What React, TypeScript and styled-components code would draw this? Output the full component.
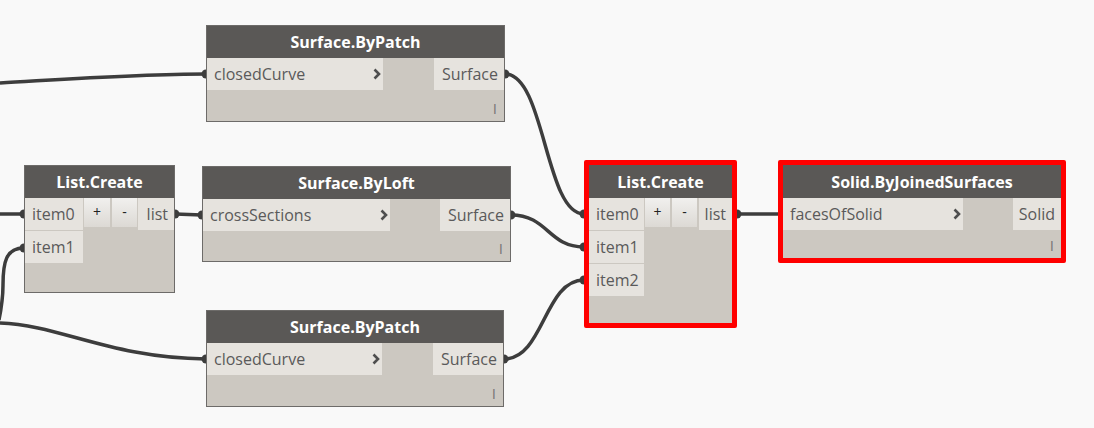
import React from "react";
import styled, { createGlobalStyle } from "styled-components";

const Global = createGlobalStyle`
  html, body { margin: 0; padding: 0; background: #f9f9f9; }
  body { font-family: "Open Sans", "Noto Sans", sans-serif; }
`;

const Canvas = styled.div`
  position: relative;
  width: 1094px;
  height: 428px;
  overflow: hidden;
  background: #f9f9f9;
`;

const Wires = styled.svg`
  position: absolute;
  left: 0;
  top: 0;
  z-index: 0;
`;

const NodeBox = styled.div<{ $x: number; $y: number; $w: number; $sel?: boolean }>`
  position: absolute;
  left: ${(p) => p.$x}px;
  top: ${(p) => p.$y}px;
  width: ${(p) => p.$w}px;
  box-sizing: border-box;
  z-index: 1;
  background: #ccc8c1;
  border: ${(p) => (p.$sel ? "5px solid #ff0000" : "1px solid #6d6b69")};
  border-radius: ${(p) => (p.$sel ? "2px" : "0")};
  display: flex;
  flex-direction: column;
`;

const Header = styled.div<{ $sel?: boolean }>`
  height: ${(p) => (p.$sel ? 33 : 32)}px;
  background: #5a5856;
  color: #ffffff;
  font-weight: 700;
  font-size: 16px;
  display: flex;
  align-items: center;
  justify-content: center;
  white-space: nowrap;
`;

const Row = styled.div`
  display: flex;
  align-items: flex-start;
`;

const ItemColumn = styled.div<{ $w: number }>`
  width: ${(p) => p.$w}px;
  display: flex;
  flex-direction: column;
  gap: 1px;
  margin-right: 1px;
`;

const InputPort = styled.div<{ $w?: number }>`
  ${(p) => (p.$w ? `width: ${p.$w}px;` : "")}
  height: 32px;
  box-sizing: border-box;
  background: #e6e3de;
  color: #5a5a5a;
  font-size: 16px;
  display: flex;
  align-items: center;
  justify-content: space-between;
  padding: 0 2px 0 7px;
  white-space: nowrap;
`;

const OutputPort = styled.div<{ $w: number }>`
  width: ${(p) => p.$w}px;
  height: 32px;
  box-sizing: border-box;
  background: #e6e3de;
  color: #5a5a5a;
  font-size: 16px;
  display: flex;
  align-items: center;
  justify-content: flex-end;
  padding-right: 6px;
  white-space: nowrap;
`;

const Spacer = styled.div`
  flex: 1;
`;

const Buttons = styled.div`
  display: flex;
  gap: 2px;
`;

const AddButton = styled.div<{ $w: number }>`
  width: ${(p) => p.$w}px;
  height: 29px;
  background: linear-gradient(#f1f0ee, #dcd9d4);
  color: #222222;
  font-size: 14px;
  display: flex;
  align-items: center;
  justify-content: center;
  padding-bottom: 3px;
  box-sizing: border-box;
`;

const Footer = styled.div<{ $h: number }>`
  height: ${(p) => p.$h}px;
  display: flex;
  justify-content: flex-end;
  align-items: flex-end;
  padding: 0 7px 5px 0;
  box-sizing: border-box;
`;

const Lacing = styled.span`
  font-size: 15px;
  line-height: 15px;
  color: #787878;
  font-weight: 400;
`;

const Chevron = () => (
  <svg width="8" height="12" viewBox="0 0 8 12">
    <polyline points="1.5,1.5 6,6 1.5,10.5" fill="none" stroke="#4e4e4e" strokeWidth="2.6" />
  </svg>
);

type FnProps = {
  x: number;
  y: number;
  w: number;
  title: string;
  input: string;
  inW: number;
  output: string;
  outW: number;
  footer: number;
  sel?: boolean;
};

const FunctionNode = ({ x, y, w, title, input, inW, output, outW, footer, sel }: FnProps) => (
  <NodeBox $x={x} $y={y} $w={w} $sel={sel}>
    <Header $sel={sel}>{title}</Header>
    <Row>
      <InputPort $w={inW}>
        <span>{input}</span>
        <Chevron />
      </InputPort>
      <Spacer />
      <OutputPort $w={outW}>{output}</OutputPort>
    </Row>
    <Footer $h={footer}>
      <Lacing>I</Lacing>
    </Footer>
  </NodeBox>
);

type ListProps = {
  x: number;
  y: number;
  w: number;
  items: string[];
  itemW: number;
  btnW: [number, number];
  outW: number;
  footer: number;
  sel?: boolean;
};

const ListNode = ({ x, y, w, items, itemW, btnW, outW, footer, sel }: ListProps) => (
  <NodeBox $x={x} $y={y} $w={w} $sel={sel}>
    <Header $sel={sel}>List.Create</Header>
    <Row>
      <ItemColumn $w={itemW}>
        {items.map((it) => (
          <InputPort key={it}>{it}</InputPort>
        ))}
      </ItemColumn>
      <Buttons>
        <AddButton $w={btnW[0]}>+</AddButton>
        <AddButton $w={btnW[1]}>-</AddButton>
      </Buttons>
      <Spacer />
      <OutputPort $w={outW}>list</OutputPort>
    </Row>
    <Footer $h={footer} />
  </NodeBox>
);

const wires = [
  "M0 83 C70 79 140 74 206 74",
  "M505 74 C545 74 545 214 584 214",
  "M511 215 C548 215 548 247 584 247",
  "M504 359 C544 359 544 280 584 280",
  "M737 214 L778 214",
  "M175 214 L202 215",
  "M0 214 L24 214",
  "M24 248 C6 248 3 262 3 285 C3 300 1 310 -1 320",
  "M0 323 C60 325 110 358 206 359",
];

const nubs: [number, number][] = [
  [206, 74],
  [505, 74],
  [511, 215],
  [504, 359],
  [584, 214],
  [584, 247],
  [584, 280],
  [737, 214],
  [175, 214],
  [202, 215],
  [24, 214],
  [24, 248],
  [206, 359],
];

export default function App() {
  return (
    <>
      <Global />
      <Canvas>
        <Wires width="1094" height="428" viewBox="0 0 1094 428">
          {wires.map((d, i) => (
            <path key={i} d={d} fill="none" stroke="#3d3d3d" strokeWidth="3.5" />
          ))}
          {nubs.map(([cx, cy], i) => (
            <circle key={i} cx={cx} cy={cy} r="4.5" fill="#3d3d3d" />
          ))}
        </Wires>

        <FunctionNode x={206} y={25} w={299} title="Surface.ByPatch" input="closedCurve" inW={176} output="Surface" outW={70} footer={31} />
        <FunctionNode x={202} y={166} w={309} title="Surface.ByLoft" input="crossSections" inW={187} output="Surface" outW={70} footer={30} />
        <FunctionNode x={206} y={310} w={298} title="Surface.ByPatch" input="closedCurve" inW={175} output="Surface" outW={70} footer={31} />

        <ListNode x={24} y={165} w={151} items={["item0", "item1"]} itemW={58} btnW={[26, 25]} outW={36} footer={29} />
        <ListNode x={584} y={160} w={153} items={["item0", "item1", "item2"]} itemW={55} btnW={[25, 25]} outW={33} footer={27} sel />

        <FunctionNode x={778} y={160} w={288} title="Solid.ByJoinedSurfaces" input="facesOfSolid" inW={180} output="Solid" outW={48} footer={28} sel />
      </Canvas>
    </>
  );
}
